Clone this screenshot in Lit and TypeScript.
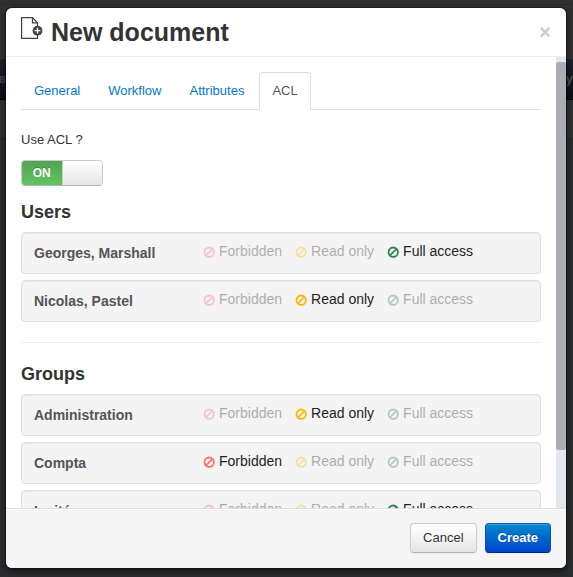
import { LitElement, html, css, svg } from "lit";
import { customElement, property, state } from "lit/decorators.js";
import { classMap } from "lit/directives/class-map.js";

type Level = "forbidden" | "readonly" | "full";
interface Entry { id: string; name: string; level: Level; }

const LEVELS: { value: Level; label: string }[] = [
  { value: "forbidden", label: "Forbidden" },
  { value: "readonly", label: "Read only" },
  { value: "full", label: "Full access" },
];

const banIcon = svg`<svg class="icon" viewBox="0 0 12 12" width="12" height="12" aria-hidden="true">
  <circle cx="6.2" cy="6.2" r="4.7" fill="none" stroke="currentColor" stroke-width="1.8"/>
  <path d="M3 9.400 9.400 3" stroke="currentColor" stroke-width="1.700"/>
</svg>`;

@customElement("acl-row")
export class AclRow extends LitElement {
  @property({ attribute: false }) entry!: Entry;

  static styles = css`
    :host { display: block; }
    .row {
      box-sizing: border-box;
      display: flex;
      height: 42px;
      margin: 0;
      padding: 8px 12px;
      border: 1px solid #e0e0e0;
      border-radius: 4px;
      background: #f4f4f4;
      box-shadow: inset 0 1px 1px rgba(0, 0, 0, 0.05);
      font-size: 14px;
      line-height: 20px;
    }
    .name { flex: 0 0 169px; padding-top: 2px; color: #555; font-weight: bold; }
    .options { display: flex; gap: 13px; }
    .option {
      position: relative;
      display: flex;
      gap: 4px;
      color: #222;
      opacity: 0.34;
      white-space: nowrap;
      cursor: pointer;
    }
    .option.on { opacity: 1; }
    .radio { position: absolute; inset: 0; margin: 0; opacity: 0; cursor: pointer; }
    .icon { display: block; margin-top: 5px; }
    .forbidden .icon { color: #ff6c60; }
    .readonly .icon { color: #ffb400; }
    .full .icon { color: #2e8050; }
  `;

  private pick(level: Level) {
    this.entry = { ...this.entry, level };
  }

  render() {
    const { id, name, level } = this.entry;
    return html`<div class="row" role="radiogroup" aria-labelledby="name">
      <span class="name" id="name">${name}</span>
      <div class="options">
        ${LEVELS.map((l) => html`<label class=${classMap({ option: true, [l.value]: true, on: l.value === level })}>
          <input class="radio" type="radio" name=${id} .checked=${l.value === level} @change=${() => this.pick(l.value)}>
          ${banIcon}<span>${l.label}</span>
        </label>`)}
      </div>
    </div>`;
  }
}

@customElement("app-root")
export class AppRoot extends LitElement {
  @state() private useAcl = true;

  private users: Entry[] = [
    { id: "u1", name: "Georges, Marshall", level: "full" },
    { id: "u2", name: "Nicolas, Pastel", level: "readonly" },
  ];
  private groups: Entry[] = [
    { id: "g1", name: "Administration", level: "readonly" },
    { id: "g2", name: "Compta", level: "forbidden" },
    { id: "g3", name: "Invité", level: "full" },
  ];

  static styles = css`
    :host {
      display: block;
      position: relative;
      box-sizing: border-box;
      height: 100vh;
      padding: 8px 7px 9px 6px;
      background: linear-gradient(#2f2f2f 0 4px, #292929 4px 5px, #303030 5px 138px, #262626 138px 139px, #2b2c2e 139px 100%);
      color: #333;
      font: 13px/20px "Liberation Sans", Arial, sans-serif;
    }
    .navbar {
      position: absolute;
      inset: 59px 0 auto;
      display: flex;
      align-items: center;
      justify-content: space-between;
      box-sizing: border-box;
      height: 41px;
      border-bottom: 1px solid #000;
      overflow: hidden;
      background: linear-gradient(#1b2230, #0a0d13);
      color: #4a4a4a;
      font-weight: bold;
    }
    .account { margin-right: -10px; }
    .dialog {
      display: flex;
      flex-direction: column;
      height: 100%;
      border-radius: 6px;
      overflow: hidden;
      background: #fff;
    }
    .shade {
      position: relative;
      height: 100%;
      border-radius: 6px;
      box-shadow: 0 3px 7px rgba(0, 0, 0, 0.6), 0 0 0 1px rgba(0, 0, 0, 0.3);
    }
    .header {
      display: flex;
      align-items: flex-start;
      flex: none;
      box-sizing: border-box;
      height: 49px;
      padding: 9px 15px;
      border-bottom: 1px solid #eee;
    }
    .doc { flex: none; margin-right: 8px; }
    .title { flex: 1; margin: 0; font-size: 25px; line-height: 30px; font-weight: bold; }
    .close {
      margin: 5px 0 0;
      padding: 0;
      border: 0;
      background: none;
      color: #ccc;
      font: bold 20px/20px "Liberation Sans", Arial, sans-serif;
      cursor: pointer;
    }
    .middle { display: flex; flex: 1; min-height: 0; }
    .body { flex: 1; overflow-y: auto; scrollbar-width: none; padding: 15px; }
    .rail { flex: none; width: 10px; box-sizing: border-box; padding-top: 5px; background: #e1e6ef; }
    .thumb { height: 87%; border-radius: 2px; background: #abaeb3; }
    .tabs {
      display: flex;
      gap: 2px;
      height: 37px;
      margin-bottom: 20px;
      border-bottom: 1px solid #ddd;
    }
    .tab {
      box-sizing: border-box;
      height: 38px;
      padding: 8px 12px;
      border: 1px solid transparent;
      border-radius: 4px 4px 0 0;
      color: #0478c4;
      text-decoration: none;
    }
    .tab.active { border-color: #ddd #ddd #fff; background: #fff; color: #555; }
    .question { display: block; margin-bottom: 10px; }
    .switch {
      position: relative;
      display: flex;
      box-sizing: border-box;
      width: 82px;
      height: 26px;
      border: 1px solid #ccc;
      border-bottom-color: #b3b3b3;
      border-radius: 4px;
      overflow: hidden;
    }
    .switch.off { flex-direction: row-reverse; }
    .check { position: absolute; inset: 0; width: 100%; height: 100%; margin: 0; opacity: 0; cursor: pointer; }
    .on-part {
      flex: 1;
      background: linear-gradient(#51a351, #62c462);
      color: #fff;
      font-size: 12px;
      font-weight: bold;
      line-height: 24px;
      text-align: center;
      text-shadow: 0 -1px 0 rgba(0, 0, 0, 0.25);
    }
    .knob { flex: 1; border-left: 1px solid #ccc; background: linear-gradient(#fff, #e6e6e6); }
    .heading { margin: 16px 0 10px; font-size: 18px; line-height: 20px; font-weight: bold; }
    .list { display: flex; flex-direction: column; gap: 6px; }
    .rule { margin: 20px 0; border: 0; border-top: 1px solid #eee; border-bottom: 1px solid #fff; }
    .rule + .heading { margin-top: 0; }
    .footer {
      display: flex;
      flex: none;
      justify-content: flex-end;
      gap: 8px;
      padding: 14px 15px 15px;
      border-top: 1px solid #ddd;
      background: #f5f5f5;
      box-shadow: inset 0 1px 0 #fff;
    }
    .btn {
      height: 30px;
      padding: 4px 12px;
      border: 1px solid #ccc;
      border-bottom-color: #b3b3b3;
      border-radius: 4px;
      background: linear-gradient(#fff, #e6e6e6);
      box-shadow: inset 0 1px 0 rgba(255, 255, 255, 0.2), 0 1px 2px rgba(0, 0, 0, 0.05);
      color: #333;
      font: 13px/20px "Liberation Sans", Arial, sans-serif;
      text-shadow: 0 1px 1px rgba(255, 255, 255, 0.75);
      cursor: pointer;
    }
    .btn.primary {
      border-color: #0062b8 #0055b0 #002a80;
      background: linear-gradient(#08c, #04c);
      color: #fff;
      font-weight: bold;
      text-shadow: 0 -1px 0 rgba(0, 0, 0, 0.25);
    }
  `;

  render() {
    return html`
      <div class="navbar">
        <svg viewBox="0 0 6 7" width="6" height="7" aria-hidden="true">
          <path d="M0 0h5v7H0z" fill="#3d3d3d"/>
          <path d="M2 1.500h1.500v1.500H2zM2 4h1.500v1.500H2z" fill="#141414"/>
        </svg>
        <span class="account">yw</span>
      </div>
      <div class="shade">
        <div class="dialog" role="dialog" aria-labelledby="title">
          <div class="header">
            <svg class="doc" viewBox="0 0 22 23" width="22" height="23" aria-hidden="true">
              <path d="M16.5 9V5.8L11.6.6H.6v20.800h15.900V18" fill="none" stroke="#444" stroke-width="1.200"/>
              <path d="M11.500.8v5.100h4.900" fill="none" stroke="#444" stroke-width="1.200"/>
              <circle cx="16.500" cy="13.700" r="4.900" fill="#444"/>
              <path d="M16.500 10.800v5.800M13.600 13.700h5.800" stroke="#fff" stroke-width="1.300"/>
            </svg>
            <h1 class="title" id="title">New document</h1>
            <button class="close" aria-label="Close">×</button>
          </div>
          <div class="middle">
            <div class="body">
              <nav class="tabs">
                <a class="tab" href="#general">General</a>
                <a class="tab" href="#workflow">Workflow</a>
                <a class="tab" href="#attributes">Attributes</a>
                <a class="tab active" href="#acl" aria-current="page">ACL</a>
              </nav>
              <label class="question" for="use-acl">Use ACL ?</label>
              <div class=${classMap({ switch: true, off: !this.useAcl })}>
                <span class="on-part">ON</span><span class="knob"></span>
                <input class="check" id="use-acl" type="checkbox" .checked=${this.useAcl}
                  @change=${() => (this.useAcl = !this.useAcl)}>
              </div>
              <h2 class="heading">Users</h2>
              <div class="list">${this.users.map((e) => html`<acl-row .entry=${e}></acl-row>`)}</div>
              <hr class="rule">
              <h2 class="heading">Groups</h2>
              <div class="list">${this.groups.map((e) => html`<acl-row .entry=${e}></acl-row>`)}</div>
            </div>
            <div class="rail"><div class="thumb"></div></div>
          </div>
          <div class="footer">
            <button class="btn">Cancel</button>
            <button class="btn primary">Create</button>
          </div>
        </div>
      </div>`;
  }
}
